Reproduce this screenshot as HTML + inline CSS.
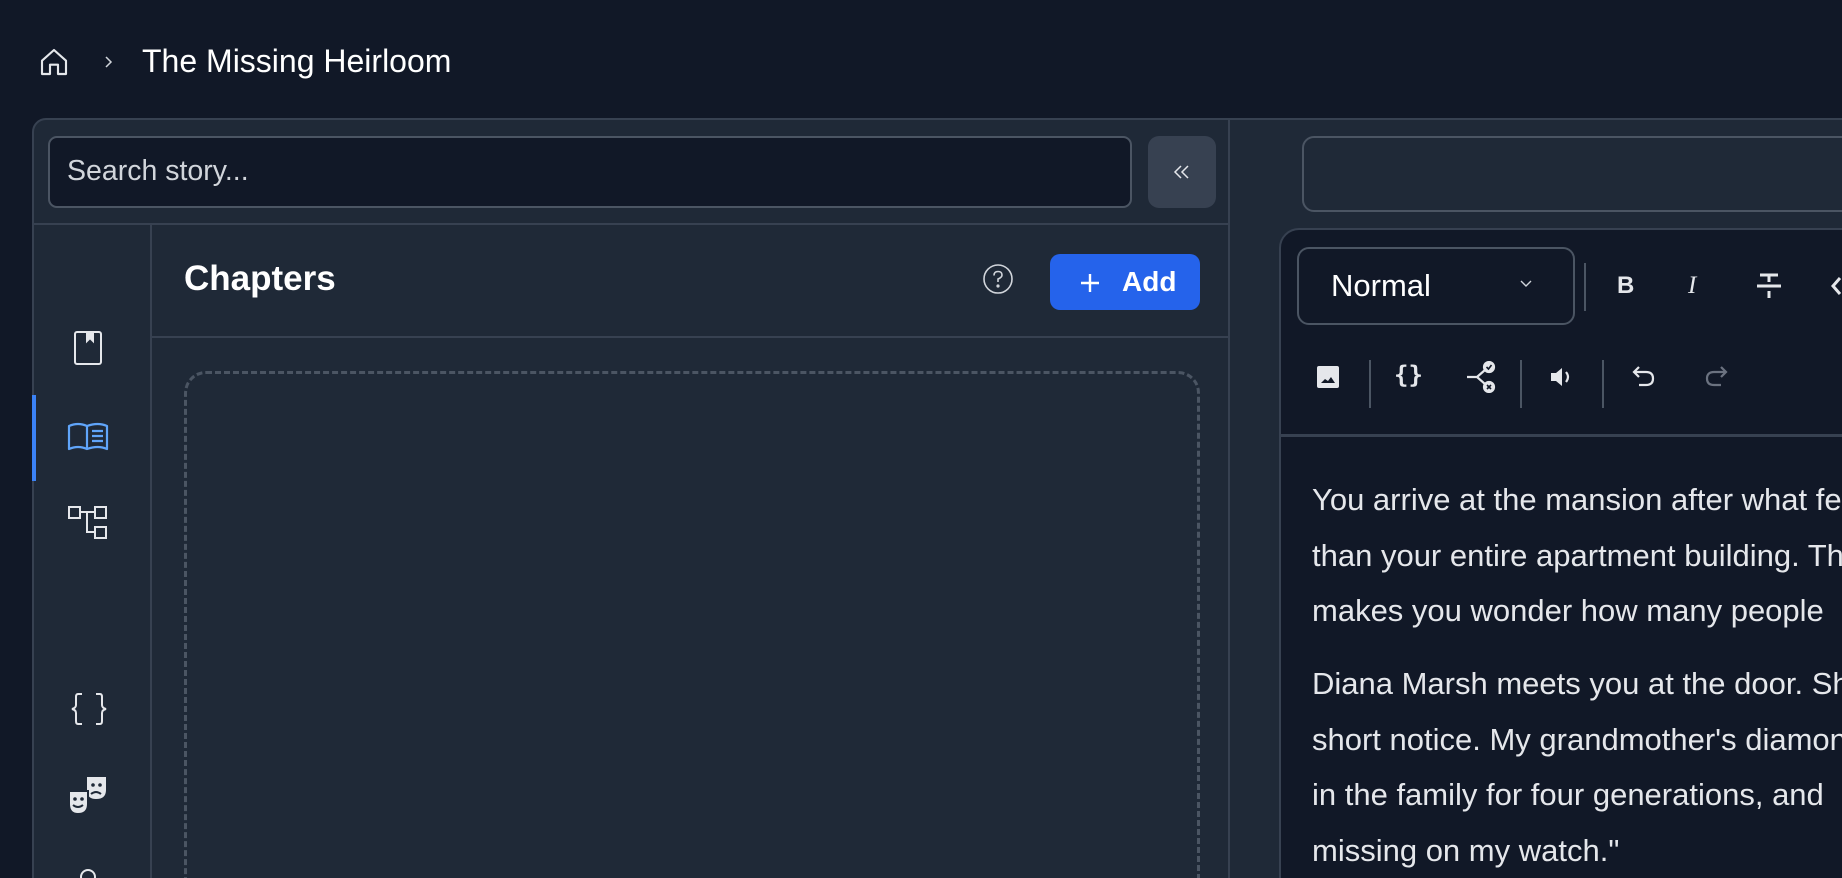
<!DOCTYPE html>
<html style="overflow:hidden;width:1842px;height:878px"><head><meta charset="utf-8"><style>
*{box-sizing:border-box;margin:0;padding:0}
html,body{width:1842px;height:878px;overflow:hidden}
body{background:#111827;font-family:"Liberation Sans",sans-serif;color:#f3f4f6}
#wrap{position:relative;width:1842px;height:878px;overflow:hidden}
.abs{position:absolute}
.panel{left:32px;top:118px;width:1840px;height:800px;background:#1f2937;border:2px solid #374151;border-radius:14px}
</style></head><body><div id="wrap">
<svg class="abs" style="left:38px;top:46px" width="32" height="32" viewBox="0 0 24 24" fill="none" stroke="#e5e7eb" stroke-width="1.6" stroke-linejoin="round"><path d="M3 11 L12 3 L21 11 V21 H15 V14 H9 V21 H3 Z"/></svg>
<svg class="abs" style="left:102px;top:54px" width="14" height="16" viewBox="0 0 14 16" fill="none" stroke="#d1d5db" stroke-width="1.5"><path d="M4 3 L9 8 L4 13"/></svg>
<div class="abs" style="left:142px;top:43px;font-size:32px;color:#fff">The Missing Heirloom</div>

<div class="abs panel"></div>
<div class="abs" style="left:48px;top:136px;width:1084px;height:72px;background:#111827;border:2px solid #4b5563;border-radius:9px"></div>
<div class="abs" style="left:67px;top:155px;font-size:28.5px;color:#d1d5db">Search story...</div>
<div class="abs" style="left:1148px;top:136px;width:68px;height:72px;background:#374151;border-radius:11px"></div>
<svg class="abs" style="left:1171px;top:161px" width="22" height="22" viewBox="0 0 22 22" fill="none" stroke="#e5e7eb" stroke-width="1.5"><path d="M10 5 L4 11 L10 17 M17 5 L11 11 L17 17"/></svg>
<div class="abs" style="left:1228px;top:120px;width:2px;height:758px;background:#374151"></div>
<div class="abs" style="left:33px;top:223px;width:1196px;height:2px;background:#374151"></div>
<div class="abs" style="left:150px;top:225px;width:2px;height:653px;background:#374151"></div>
<div class="abs" style="left:32px;top:395px;width:4px;height:86px;background:#3b82f6"></div>
<svg class="abs" style="left:72px;top:330px" width="32" height="36" viewBox="0 0 32 36" fill="none" stroke="#e5e7eb" stroke-width="2"><rect x="3" y="2" width="26" height="32" rx="2"/><path d="M15 2 V11 L18 8 L21 11 V2 Z" fill="#e5e7eb"/></svg>
<svg class="abs" style="left:67px;top:422px" width="42" height="30" viewBox="0 0 42 30" fill="none" stroke="#60a5fa" stroke-width="2.2" stroke-linejoin="round"><path d="M2 4 Q11 0 20 4 V27 Q11 23 2 27 Z M40 4 Q31 0 20 4 V27 Q31 23 40 27 Z"/><path d="M25 9 H36 M25 14 H36 M25 19 H36"/></svg>
<svg class="abs" style="left:68px;top:506px" width="40" height="34" viewBox="0 0 40 34" fill="none" stroke="#e5e7eb" stroke-width="2"><rect x="1" y="1" width="11" height="11"/><rect x="27" y="1" width="11" height="11"/><rect x="27" y="21" width="11" height="11"/><path d="M12 6 H27 M19 6 V26 H27"/></svg>
<svg class="abs" style="left:70px;top:692px" width="38" height="34" viewBox="0 0 38 34" fill="none" stroke="#e5e7eb" stroke-width="2"><path d="M12 2 H8 Q6 2 6 5 V13 Q6 16 2 17 Q6 18 6 21 V29 Q6 32 8 32 H12 M26 2 H30 Q32 2 32 5 V13 Q32 16 36 17 Q32 18 32 21 V29 Q32 32 30 32 H26"/></svg>
<svg class="abs" style="left:68px;top:777px" width="40" height="38" viewBox="0 0 40 38" fill="#e5e7eb"><path d="M19 0 H38 V13 Q38 22 28 22 Q19 22 19 13 Z"/><circle cx="25" cy="8" r="1.8" fill="#1f2937"/><circle cx="32" cy="8" r="1.8" fill="#1f2937"/><path d="M23 17 Q28 13 33 17" stroke="#1f2937" stroke-width="2" fill="none"/><path d="M1 14 H20 V27 Q20 37 10 37 Q1 37 1 27 Z" stroke="#1f2937" stroke-width="2"/><circle cx="7" cy="22" r="1.8" fill="#1f2937"/><circle cx="14" cy="22" r="1.8" fill="#1f2937"/><path d="M5 28 Q10 32 15 28" stroke="#1f2937" stroke-width="2" fill="none"/></svg>
<svg class="abs" style="left:78px;top:868px" width="20" height="16" viewBox="0 0 20 16" fill="none" stroke="#e5e7eb" stroke-width="2"><circle cx="10" cy="9" r="7"/></svg>
<div class="abs" style="left:184px;top:259px;font-size:35px;font-weight:bold;color:#fff">Chapters</div>
<svg class="abs" style="left:982px;top:263px" width="32" height="32" viewBox="0 0 32 32" fill="none" stroke="#d1d5db" stroke-width="1.6"><circle cx="16" cy="16" r="14"/><path d="M12 12.5 Q12 8.5 16 8.5 Q20 8.5 20 12 Q20 14.5 16 16 V19"/><circle cx="16" cy="23" r="0.8" fill="#d1d5db"/></svg>
<div class="abs" style="left:1050px;top:254px;width:150px;height:56px;background:#2563eb;border-radius:10px"></div>
<svg class="abs" style="left:1079px;top:272px" width="22" height="22" viewBox="0 0 22 22" stroke="#fff" stroke-width="2.4"><path d="M11 2 V20 M2 11 H20"/></svg>
<div class="abs" style="left:1122px;top:266px;font-size:28px;font-weight:bold;color:#fff">Add</div>
<div class="abs" style="left:152px;top:336px;width:1077px;height:2px;background:#374151"></div>
<div class="abs" style="left:184px;top:371px;width:1016px;height:560px;border:3px dashed #4b5563;border-radius:22px"></div>
<div class="abs" style="left:1302px;top:136px;width:600px;height:76px;border:2px solid #4b5563;border-radius:12px"></div>
<div class="abs" style="left:1279px;top:228px;width:600px;height:700px;background:#111827;border:2px solid #374151;border-radius:20px"></div>
<div class="abs" style="left:1297px;top:247px;width:278px;height:78px;border:2px solid #4b5563;border-radius:12px"></div>
<div class="abs" style="left:1331px;top:268px;font-size:31px;color:#fff">Normal</div>
<svg class="abs" style="left:1518px;top:278px" width="16" height="12" viewBox="0 0 16 12" fill="none" stroke="#d1d5db" stroke-width="1.4"><path d="M3 3 L8 8 L13 3"/></svg>
<div class="abs" style="left:1584px;top:263px;width:2px;height:48px;background:#4b5563"></div>
<div class="abs" style="left:1617px;top:272px;font-size:24px;font-weight:bold;color:#e5e7eb">B</div>
<div class="abs" style="left:1688px;top:272px;font-size:25px;font-style:italic;color:#e5e7eb;font-family:'Liberation Serif',serif">I</div>
<svg class="abs" style="left:1754px;top:272px" width="30" height="28" viewBox="0 0 30 28" stroke="#e5e7eb" stroke-width="3"><path d="M6 3 H24 M15 3 V10 M3 14 H27 M15 19 V26"/></svg>
<svg class="abs" style="left:1829px;top:275px" width="13" height="22" viewBox="0 0 13 22" fill="none" stroke="#e5e7eb" stroke-width="3"><path d="M11 3 L4 11 L11 19"/></svg>
<svg class="abs" style="left:1316px;top:365px" width="24" height="24" viewBox="0 0 24 24"><rect x="1" y="1" width="22" height="22" rx="2" fill="#e5e7eb"/><path d="M5 18 L9 14 L12 16 L15 12 L19 18 Z" fill="#111827"/></svg>
<div class="abs" style="left:1369px;top:360px;width:2px;height:48px;background:#4b5563"></div>
<div class="abs" style="left:1394px;top:361px;font-size:24px;font-weight:bold;color:#e5e7eb;font-family:'DejaVu Sans Mono',monospace">{}</div>
<svg class="abs" style="left:1465px;top:361px" width="32" height="32" viewBox="0 0 32 32" fill="none" stroke="#e5e7eb" stroke-width="2.2"><path d="M2 16 H12 L20 9 M12 16 L20 23"/><circle cx="24" cy="6" r="5" fill="#e5e7eb"/><circle cx="24" cy="26" r="5" fill="#e5e7eb"/><path d="M21.5 6 L23.5 8 L26.5 4 M22 24 L26 28 M26 24 L22 28" stroke="#111827" stroke-width="1.6"/></svg>
<div class="abs" style="left:1520px;top:360px;width:2px;height:48px;background:#4b5563"></div>
<svg class="abs" style="left:1549px;top:366px" width="24" height="22" viewBox="0 0 24 22"><path d="M2 7 H7 L13 2 V20 L7 15 H2 Z" fill="#e5e7eb"/><path d="M17 6 Q21 11 17 16" stroke="#e5e7eb" stroke-width="2.2" fill="none"/></svg>
<div class="abs" style="left:1602px;top:360px;width:2px;height:48px;background:#4b5563"></div>
<svg class="abs" style="left:1631px;top:364px" width="26" height="26" viewBox="0 0 26 26" fill="none" stroke="#e5e7eb" stroke-width="2.2"><path d="M8 3 L3 8 L8 13 M3 8 H15 Q22 8 22 14.5 Q22 21 15 21 H8"/></svg>
<svg class="abs" style="left:1703px;top:364px" width="26" height="26" viewBox="0 0 26 26" fill="none" stroke="#6b7280" stroke-width="2.2"><path d="M18 3 L23 8 L18 13 M23 8 H11 Q4 8 4 14.5 Q4 21 11 21 H18"/></svg>
<div class="abs" style="left:1281px;top:434px;width:561px;height:3px;background:#374151"></div>
<div class="abs" style="left:1312px;top:472px;font-size:31px;line-height:55.5px;color:#e5e7eb;white-space:nowrap">You arrive at the mansion after what feels<br>than your entire apartment building. The<br>makes you wonder how many people</div>
<div class="abs" style="left:1312px;top:656px;font-size:31px;line-height:55.5px;color:#e5e7eb;white-space:nowrap">Diana Marsh meets you at the door. She<br>short notice. My grandmother's diamond<br>in the family for four generations, and<br>missing on my watch."</div>
</div></body></html>
